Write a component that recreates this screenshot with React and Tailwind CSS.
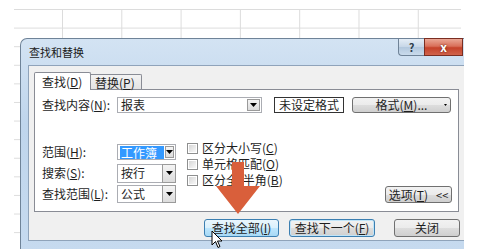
import React from "react";

const Tri = ({ w = 7, h = 4 }) => (
  <svg width={w} height={h} viewBox={`0 0 ${w} ${h}`}>
    <polygon points={`0,0 ${w},0 ${w / 2},${h}`} fill="#000" />
  </svg>
);

const U = ({ children }) => <span className="underline underline-offset-1">{children}</span>;

const Combo = ({ text, w, h, highlight, small }) => (
  <div
    className={`flex items-stretch bg-white border border-[#abadb3] ${w} ${h}`}
  >
    <div className="flex-1 flex items-center pl-[2px]">
      {highlight ? (
        <span className="bg-[#3399ff] text-white leading-[13px] px-[1px] w-[44px]">{text}</span>
      ) : (
        <span className="leading-[14px] pl-[1px]">{text}</span>
      )}
    </div>
    <div
      className={`flex items-center justify-center border border-[#9a9a9a] bg-[linear-gradient(to_bottom,#f4f4f4,#dcdcdc)] ${
        small ? "w-[13px] m-[1px]" : "w-[14px] -my-[1px] -mr-[1px]"
      }`}
    >
      <Tri w={7} h={4} />
    </div>
  </div>
);

const Btn = ({ children, className = "", variant = "normal" }) => {
  const v =
    variant === "hover"
      ? "border-[#3c7fb1] bg-[linear-gradient(to_bottom,#eaf6fd_0%,#d9f0fc_50%,#bee6fd_51%,#a7d9f5_100%)]"
      : variant === "focus"
      ? "border-[#3c7fb1] shadow-[inset_0_0_0_1px_#c0e4f8] bg-[linear-gradient(to_bottom,#f2f2f2_0%,#ebebeb_50%,#dddddd_51%,#cfcfcf_100%)]"
      : "border-[#707070] bg-[linear-gradient(to_bottom,#f2f2f2_0%,#ebebeb_50%,#dddddd_51%,#cfcfcf_100%)]";
  return (
    <div
      className={`flex items-center justify-center rounded-[3px] border leading-[14px] ${v} ${className}`}
    >
      {children}
    </div>
  );
};

const Check = ({ children }) => (
  <div className="h-[16px] flex items-center gap-[4px]">
    <div className="w-[11px] h-[11px] border border-[#8e8f8f] bg-white p-[1px]">
      <div className="w-full h-full bg-[linear-gradient(135deg,#d6d6d6,#f8f8f8)]" />
    </div>
    <span className="leading-[14px]">{children}</span>
  </div>
);

export default function App() {
  return (
    <div className="relative w-[484px] h-[249px] overflow-hidden bg-white font-['Noto_Sans_CJK_SC','Noto_Sans',sans-serif] text-[12px] text-[#1e1e1e]">
      {/* spreadsheet grid */}
      <div className="absolute left-[14px] top-[9px] w-[447px] h-[240px] [background-image:linear-gradient(to_right,#dcdcdc_1px,transparent_1px),linear-gradient(to_bottom,#dcdcdc_1px,transparent_1px)] [background-size:59.3px_18.6px] [background-position:48px_0px]" />

      {/* dialog */}
      <div className="absolute left-[20px] top-[38px] w-[444px] h-[215px] rounded-tl-[7px] border border-r-0 border-[#6f8398] bg-[linear-gradient(to_bottom,#d3e3f3,#bfd5ec_40%,#c6daef)] flex flex-col">
        {/* title bar */}
        <div className="h-[26px] flex items-start shrink-0">
          <span className="ml-[8px] mt-[6px] text-[11px] leading-[14px] text-[#1b1b1b]">查找和替换</span>
          <div className="ml-auto mr-[1px] flex -mt-[1px]">
            <div className="w-[26px] h-[18px] rounded-bl-[4px] border border-r-0 border-[#6f8398] bg-[linear-gradient(to_bottom,#e4edf6,#c6d6e7_50%,#b2c7dd_51%,#c9dbec)] flex items-center justify-center text-[11px] font-bold text-[#2d3b4a] leading-none">
              ?
            </div>
            <div className="w-[39px] h-[18px] border border-[#7a2e22] bg-[linear-gradient(to_bottom,#eaa795,#d9705a_45%,#c5422a_55%,#d0634b)] flex items-center justify-center text-[12px] font-bold text-white leading-none [text-shadow:0_0_2px_#4a1208]">
              x
            </div>
          </div>
        </div>

        {/* body */}
        <div className="ml-[7px] h-[176px] shrink-0 bg-[#f0f0f0] border border-r-0 border-[#8fa3ba] flex flex-col">
          {/* tabs */}
          <div className="ml-[5px] mt-[6px] h-[17px] flex items-end relative z-10">
            <div className="w-[57px] h-[18px] -mb-[1px] bg-white border border-b-0 border-[#898c95] rounded-t-[2px] flex items-center pl-[7px] leading-[14px]">
              查找(<U>D</U>)
            </div>
            <div className="w-[51px] h-[15px] border border-l-0 border-b-0 border-[#898c95] rounded-tr-[2px] bg-[linear-gradient(to_bottom,#f3f3f3,#e3e3e3)] flex items-center pl-[4px] leading-[13px]">
              替换(<U>P</U>)
            </div>
          </div>

          {/* panel */}
          <div className="ml-[5px] w-[425px] h-[123px] bg-white border border-[#898c95] flex flex-col">
            {/* row 1 */}
            <div className="mt-[7px] ml-[7px] flex items-center h-[16px]">
              <span className="w-[75px] leading-[14px]">查找内容(<U>N</U>):</span>
              <Combo text="报表" w="w-[145px]" h="h-[16px]" small />
              <div className="ml-[12px] w-[70px] h-[16px] border border-[#333] flex items-center justify-center leading-[14px]">
                未设定格式
              </div>
              <Btn className="ml-[8px] w-[99px] h-[16px] relative">
                <span>格式(<U>M</U>)...</span>
                <span className="absolute right-[3px] top-[6px]">
                  <Tri w={3} h={2} />
                </span>
              </Btn>
            </div>

            {/* row group */}
            <div className="mt-[30px] ml-[7px] mr-[6px] flex items-start">
              <div className="flex flex-col gap-[3px]">
                <div className="flex items-center h-[18px]">
                  <span className="w-[75px] leading-[14px]">范围(<U>H</U>):</span>
                  <Combo text="工作簿" w="w-[59px]" h="h-[16px]" highlight small />
                </div>
                <div className="flex items-center h-[18px]">
                  <span className="w-[75px] leading-[14px]">搜索(<U>S</U>):</span>
                  <Combo text="按行" w="w-[59px]" h="h-[19px]" />
                </div>
                <div className="flex items-center h-[18px]">
                  <span className="w-[75px] leading-[14px]">查找范围(<U>L</U>):</span>
                  <Combo text="公式" w="w-[59px]" h="h-[18px]" />
                </div>
              </div>
              <div className="ml-[11px] -mt-[3px] flex flex-col">
                <Check>区分大小写(<U>C</U>)</Check>
                <Check>单元格匹配(<U>O</U>)</Check>
                <Check>区分全/半角(<U>B</U>)</Check>
              </div>
              <Btn className="ml-auto self-end w-[67px] h-[17px] gap-[8px]">
                <span>选项(<U>T</U>)</span>
                <span className="text-[11px]">&lt;&lt;</span>
              </Btn>
            </div>
          </div>

          {/* bottom buttons */}
          <div className="mt-[7px] mr-[4px] flex justify-end">
            <Btn variant="hover" className="w-[75px] h-[18px]">
              查找全部(<U>I</U>)
            </Btn>
            <Btn variant="focus" className="ml-[10px] w-[86px] h-[18px]">
              查找下一个(<U>F</U>)
            </Btn>
            <Btn className="ml-[19px] w-[66px] h-[18px]">关闭</Btn>
          </div>
        </div>
      </div>

      {/* red arrow annotation */}
      <svg className="absolute left-[214px] top-[162px]" width="48" height="54" viewBox="0 0 48 54">
        <polygon points="18,0 30,0 30,24 46,24 24,52 2,24 18,24" fill="#d95f3b" />
      </svg>

      {/* mouse cursor */}
      <svg className="absolute left-[211px] top-[230px]" width="12" height="19" viewBox="0 0 12 19">
        <polygon points="1,1 1,15 4.5,11.5 7,17.5 9,16.5 6.5,11 11,11" fill="#fff" stroke="#000" strokeWidth="1" strokeLinejoin="round" />
      </svg>
    </div>
  );
}
